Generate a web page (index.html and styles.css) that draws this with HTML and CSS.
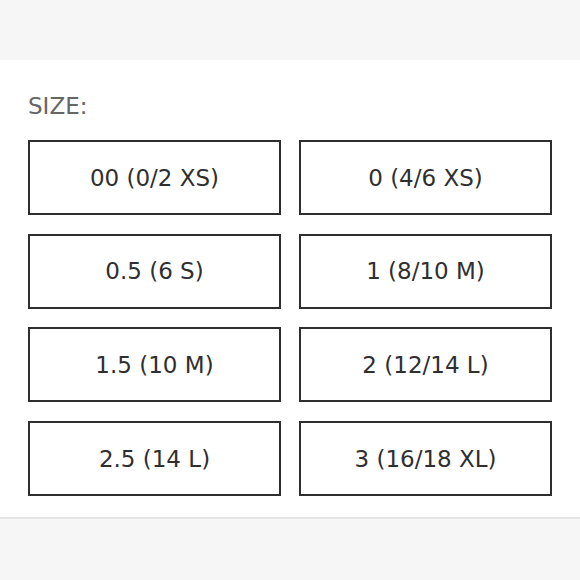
FILE: index.html
```html
<!DOCTYPE html>
<html lang="en">
<head>
    <meta charset="UTF-8">
    <meta name="viewport" content="width=device-width, initial-scale=1.0">
    <title>Size</title>
    <link rel="stylesheet" href="styles.css">
</head>
<body>
    <div class="top-band"></div>
    <div class="size-panel">
        <div class="size-label">SIZE:</div>
        <div class="size-grid">
            <div class="size-option">00 (0/2 XS)</div>
            <div class="size-option">0 (4/6 XS)</div>
            <div class="size-option">0.5 (6 S)</div>
            <div class="size-option">1 (8/10 M)</div>
            <div class="size-option">1.5 (10 M)</div>
            <div class="size-option">2 (12/14 L)</div>
            <div class="size-option">2.5 (14 L)</div>
            <div class="size-option">3 (16/18 XL)</div>
        </div>
    </div>
</body>
</html>
```
FILE: styles.css
```css
/* CSS */
body {
    font-family: "DejaVu Sans", sans-serif;
    background-color: #f6f6f6;
    margin: 0;
    padding: 0;
}

.top-band {
    height: 60px;
}

.size-panel {
    background-color: #fff;
    padding: 32px 28px 21px 28px;
    border-bottom: 2px solid #e4e4e4;
}

.size-label {
    font-size: 23px;
    line-height: 28px;
    color: #666;
    margin-bottom: 20px;
}

.size-grid {
    display: grid;
    grid-template-columns: 1fr 1fr;
    column-gap: 18px;
    row-gap: 18.7px;
}

.size-option {
    height: 75px;
    box-sizing: border-box;
    border: 2px solid #2e2e2e;
    display: flex;
    align-items: center;
    justify-content: center;
    font-size: 23px;
    color: #2f2f2f;
}
```
